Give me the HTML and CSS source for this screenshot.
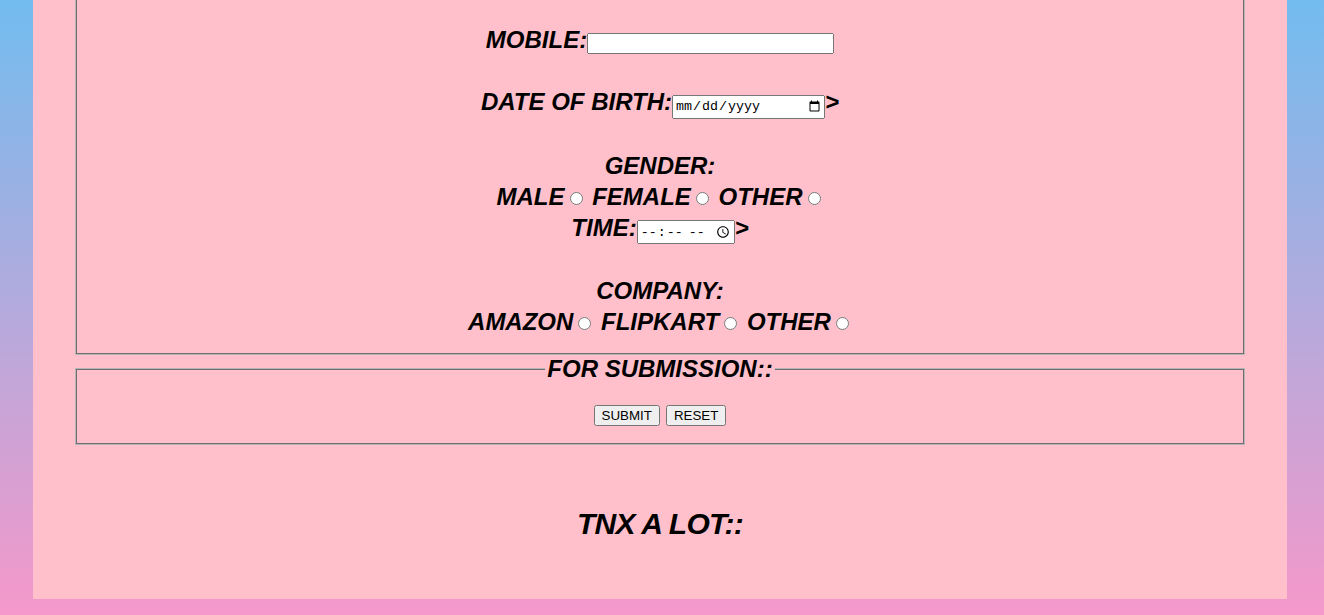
FILE: index.html
```html
<!DOCTYPE html>
<html lang="en">
<head>
<meta charset="utf-8">
<title>Registration Form</title>
<link rel="stylesheet" href="styles.css">
</head>
<body>
<div class="page">
  <form class="form">
    <fieldset class="box box-details">
      <div class="fields">
        MOBILE:<input class="in-text" type="text"><br><br>
        DATE OF BIRTH:<input class="in-date" type="date">&gt;<br><br>
        GENDER:<br>
        MALE<input type="radio" name="gender"> FEMALE<input type="radio" name="gender"> OTHER<input type="radio" name="gender"><br>
        TIME:<input class="in-time" type="time">&gt;<br><br>
        COMPANY:<br>
        AMAZON<input type="radio" name="company"> FLIPKART<input type="radio" name="company"> OTHER<input type="radio" name="company">
      </div>
    </fieldset>
    <fieldset class="box box-submit">
      <legend class="legend">FOR SUBMISSION::</legend>
      <div class="buttons">
        <button class="btn" type="submit">SUBMIT</button>
        <button class="btn" type="reset">RESET</button>
      </div>
    </fieldset>
  </form>
  <div class="thanks">TNX A LOT::</div>
</div>
</body>
</html>
```
FILE: styles.css
```css
html {
  min-height: 100%;
  background: linear-gradient(#72bcef, #f598ca);
}
body {
  margin: 0;
}
.page {
  margin: -30px 37px 16px 33px;
  background: #ffc0cb;
  padding: 0 0 57px 0;
  font-family: "Liberation Sans", Arial, sans-serif;
  font-weight: bold;
  font-style: italic;
  color: #000;
}
.form {
  margin: 0;
}
.box {
  margin: 0 43px;
  min-width: 0;
  border: 1px solid #6e6e6e;
  box-shadow: 0 0 0 1px #b4b4b4;
}
.box-details {
  padding: 53px 12px 16px;
}
.fields {
  font-size: 24px;
  line-height: 31px;
  text-align: center;
}
.fields input {
  font-family: "Liberation Sans", Arial, sans-serif;
  font-style: normal;
  font-weight: normal;
}
.in-text {
  width: 247px;
  height: 21px;
  box-sizing: border-box;
}
.in-date {
  width: 153px;
  height: 24px;
  box-sizing: border-box;
  font-family: "Liberation Mono", monospace !important;
}
.in-time {
  width: 98px;
  height: 24px;
  box-sizing: border-box;
  font-family: "Liberation Mono", monospace !important;
}
.box-submit {
  margin-top: 1px;
  padding: 0 12px 17px;
}
.legend {
  font-size: 24px;
  line-height: 28px;
  padding: 0 2px;
  margin: 0 auto;
  background: #ffc0cb;
}
.buttons {
  display: flex;
  justify-content: center;
  gap: 6px;
  padding-top: 22px;
}
.btn {
  font-family: "Liberation Sans", Arial, sans-serif;
  font-size: 13.333px;
  font-style: normal;
  font-weight: normal;
}
.thanks {
  margin-top: 62px;
  font-size: 30px;
  line-height: 36px;
  letter-spacing: -0.7px;
  text-align: center;
}
```
